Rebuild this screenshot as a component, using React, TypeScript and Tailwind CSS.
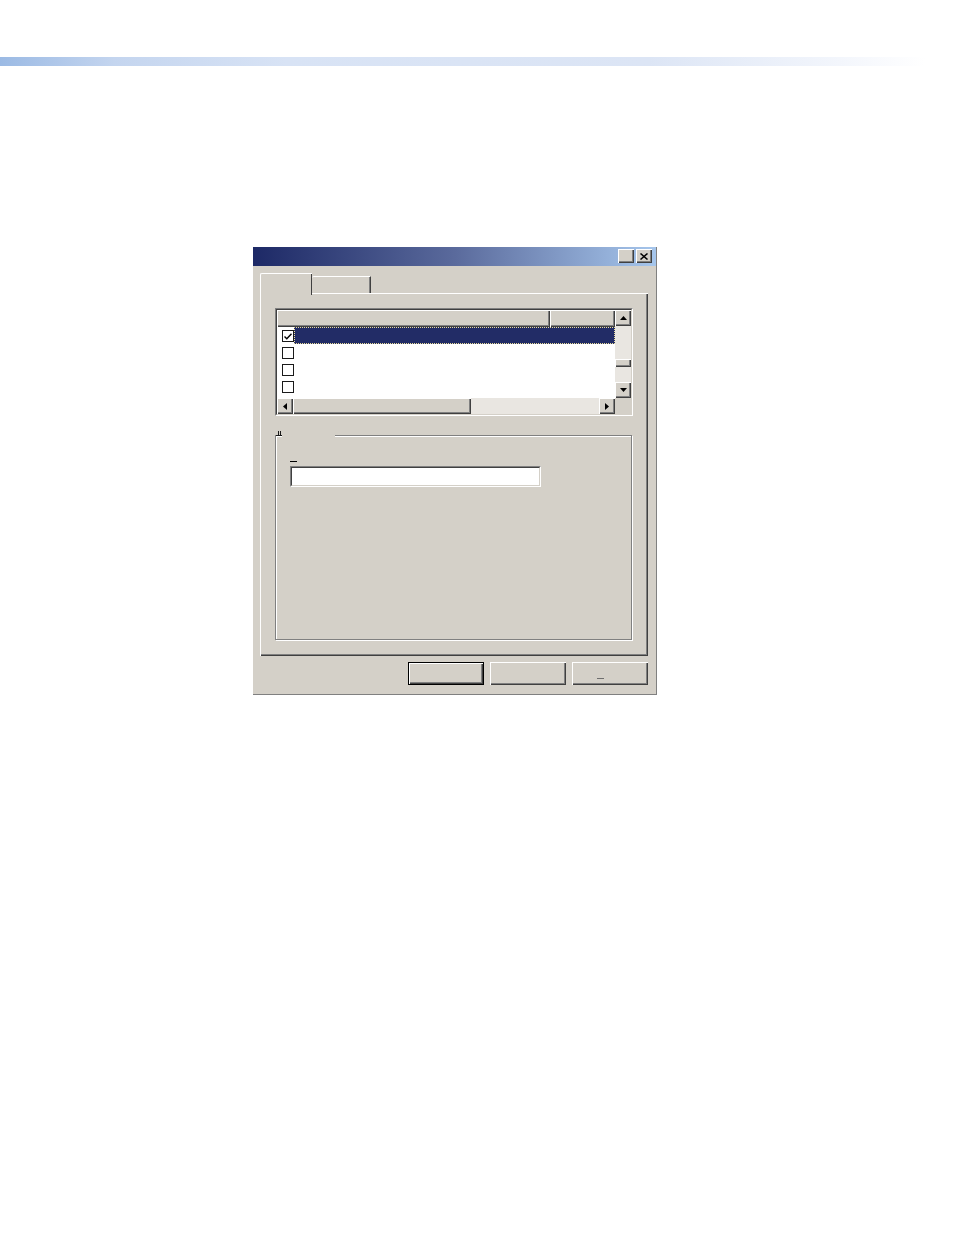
import React from 'react';

const raised = "shadow-[inset_1px_1px_0_#ffffff,inset_-1px_-1px_0_#404040,inset_-2px_-2px_0_#808080]";

function UpArrow() {
    return (
        <svg width="7" height="4" viewBox="0 0 7 4"><polygon points="3.5,0 7,4 0,4" fill="#000" /></svg>
    );
}

function DownArrow() {
    return (
        <svg width="7" height="4" viewBox="0 0 7 4"><polygon points="0,0 7,0 3.5,4" fill="#000" /></svg>
    );
}

function LeftArrow() {
    return (
        <svg width="4" height="7" viewBox="0 0 4 7"><polygon points="4,0 4,7 0,3.5" fill="#000" /></svg>
    );
}

function RightArrow() {
    return (
        <svg width="4" height="7" viewBox="0 0 4 7"><polygon points="0,0 4,3.5 0,7" fill="#000" /></svg>
    );
}

function CheckBox({ checked }: { checked?: boolean }) {
    return (
        <div className="w-[12px] h-[12px] border border-[#1a1a1a] bg-white flex items-center justify-center">
            {checked && (
                <svg width="8" height="7" viewBox="0 0 8 7">
                    <polyline points="0.5,3.5 2.8,5.8 7.5,0.8" fill="none" stroke="#000" strokeWidth="1.4" />
                </svg>
            )}
        </div>
    );
}

function ListRow({ selected, checked }: { selected?: boolean; checked?: boolean }) {
    return (
        <div className="h-[17px] flex items-start">
            <div className="pl-[5px] pt-[3px]">
                <CheckBox checked={checked} />
            </div>
            <div className={selected
                ? "ml-[0px] flex-1 h-[17px] bg-[#222c66] border border-dotted border-[#e9dc9a]"
                : "ml-[0px] flex-1 h-[17px]"} />
        </div>
    );
}

export default function App() {
    return (
        <div className="min-h-screen w-full bg-white font-['Liberation_Sans',Arial,sans-serif] text-[11px]">
            <div className="h-[57px]" />
            <div className="h-[9px] w-full bg-[linear-gradient(to_right,#9bbae4_0%,#c4d5ef_12%,#d8e3f5_30%,#dce5f5_68%,#f3f6fc_88%,#ffffff_97%)]" />

            {/* dialog */}
            <div className="ml-[253px] mt-[181px] w-[404px] h-[448px] bg-[#d4d0c8] border-r border-b border-[#808080] flex flex-col">
                {/* title bar */}
                <div className="h-[19px] bg-[linear-gradient(to_right,#1d2966,#5a6a9c_50%,#a6c6ec)] flex items-start justify-end pt-[2px] pr-[4px] gap-[2px]">
                    <div className={`w-[16px] h-[14px] bg-[#d4d0c8] ${raised}`} />
                    <div className={`w-[16px] h-[14px] bg-[#d4d0c8] ${raised} flex items-center justify-center`}>
                        <svg width="8" height="7" viewBox="0 0 8 7">
                            <line x1="0.5" y1="0.5" x2="7.5" y2="6.5" stroke="#000" strokeWidth="1.5" />
                            <line x1="7.5" y1="0.5" x2="0.5" y2="6.5" stroke="#000" strokeWidth="1.5" />
                        </svg>
                    </div>
                </div>

                {/* tabs */}
                <div className="mt-[7px] ml-[7px] h-[20px] flex items-end">
                    <div className="relative z-10 -mb-[2px] w-[52px] h-[22px] bg-[#d4d0c8] border-l border-t border-white rounded-tl-[2px] shadow-[inset_-1px_0_0_#808080,-1px_0_0_#404040_inset]" >
                        <div className="h-full w-full border-r border-[#404040]" />
                    </div>
                    <div className="w-[59px] h-[17px] bg-[#d4d0c8] border-t border-white rounded-tl-[2px] border-r border-r-[#404040] shadow-[inset_-1px_0_0_#808080]" />
                </div>

                {/* panel */}
                <div className="ml-[7px] w-[388px] h-[363px] bg-[#d4d0c8] pl-[15px] pt-[15px] shadow-[inset_1px_1px_0_#ffffff,inset_-1px_-1px_0_#404040,inset_-2px_-2px_0_#808080]">
                    {/* list view */}
                    <div className="w-[358px] h-[108px] border border-t-[#808080] border-l-[#808080] border-r-white border-b-white">
                        <div className="w-full h-full border border-t-[#404040] border-l-[#404040] border-r-[#d4d0c8] border-b-[#d4d0c8] bg-white grid grid-cols-[338px_16px] grid-rows-[88px_16px]">
                            <div className="overflow-hidden flex flex-col">
                                <div className="h-[17px] flex shrink-0">
                                    <div className={`w-[273px] h-[17px] bg-[#d4d0c8] ${raised}`} />
                                    <div className={`flex-1 h-[17px] bg-[#d4d0c8] ${raised}`} />
                                </div>
                                <ListRow selected checked />
                                <ListRow />
                                <ListRow />
                                <ListRow />
                            </div>
                            <div className="flex flex-col bg-[#e9e6e1]">
                                <div className={`h-[16px] bg-[#d4d0c8] ${raised} flex items-center justify-center`}><UpArrow /></div>
                                <div className="h-[33px]" />
                                <div className={`h-[8px] bg-[#d4d0c8] ${raised}`} />
                                <div className="flex-1" />
                                <div className={`h-[16px] bg-[#d4d0c8] ${raised} flex items-center justify-center`}><DownArrow /></div>
                            </div>
                            <div className="flex bg-[#e9e6e1]">
                                <div className={`w-[16px] h-[16px] bg-[#d4d0c8] ${raised} flex items-center justify-center`}><LeftArrow /></div>
                                <div className={`w-[178px] h-[16px] bg-[#d4d0c8] ${raised}`} />
                                <div className="flex-1" />
                                <div className={`w-[16px] h-[16px] bg-[#d4d0c8] ${raised} flex items-center justify-center`}><RightArrow /></div>
                            </div>
                            <div className="bg-[#d4d0c8]" />
                        </div>
                    </div>

                    {/* group box */}
                    <div className="relative mt-[19px] w-[357px] h-[205px] border border-[#808080] shadow-[inset_1px_1px_0_#ffffff,1px_1px_0_#ffffff] pl-[14px] pt-[25px]">
                        <div className="absolute -top-[1px] left-[6px] w-[53px] h-[2px] bg-[#d4d0c8]" />
                        <svg className="absolute -top-[5px] left-0" width="7" height="5" viewBox="0 0 7 5">
                            <rect x="2" y="0" width="1" height="5" fill="#1a1a1a" />
                            <rect x="4" y="0" width="1" height="5" fill="#1a1a1a" />
                            <rect x="0" y="4" width="6" height="1" fill="#1a1a1a" />
                        </svg>
                        <div className="h-px w-[7px] bg-black" />
                        <div className="mt-[4px] w-[251px] h-[21px] border border-t-[#808080] border-l-[#808080] border-r-white border-b-white">
                            <div className="w-full h-full border border-t-[#404040] border-l-[#404040] border-r-[#d4d0c8] border-b-[#d4d0c8] bg-white" />
                        </div>
                    </div>
                </div>

                {/* buttons */}
                <div className="mt-[6px] pr-[8px] flex justify-end gap-[6px]">
                    <div className="w-[76px] h-[23px] border border-black bg-[#d4d0c8]">
                        <div className={`w-full h-full ${raised}`} />
                    </div>
                    <div className={`w-[76px] h-[23px] bg-[#d4d0c8] ${raised}`} />
                    <div className={`w-[76px] h-[23px] bg-[#d4d0c8] ${raised} pl-[25px] pt-[16px]`}>
                        <div className="h-px w-[7px] bg-[#6e6e6e]" />
                    </div>
                </div>
            </div>
        </div>
    );
}
